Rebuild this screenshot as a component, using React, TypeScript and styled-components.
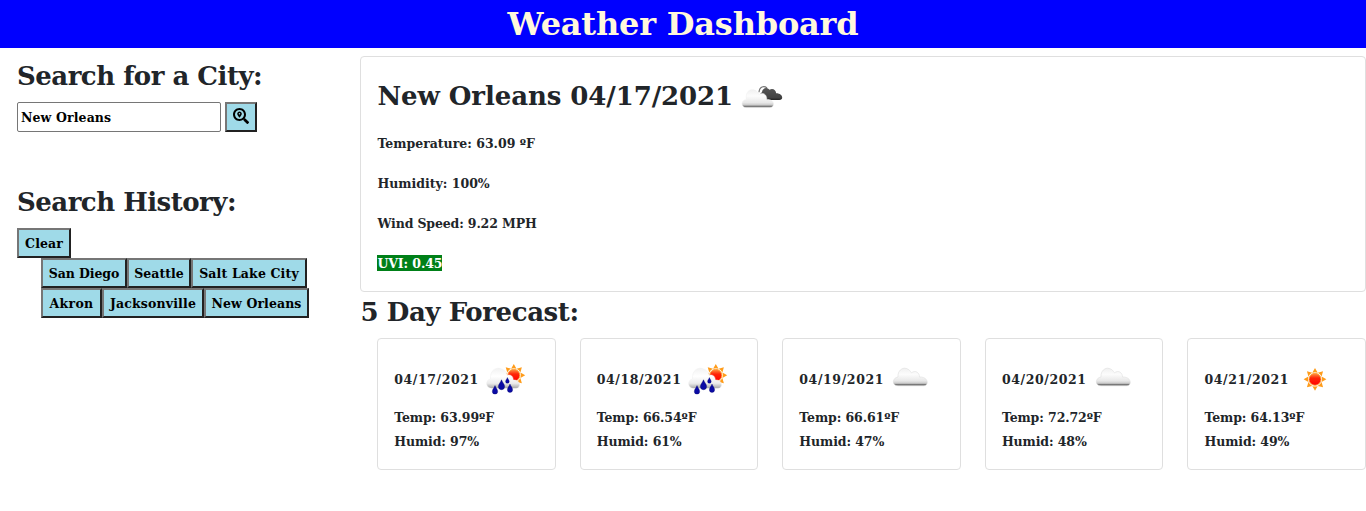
import React, { useState } from 'react';
import styled, { createGlobalStyle } from 'styled-components';
import { FaSearchLocation } from 'react-icons/fa';

const GlobalStyle = createGlobalStyle`
  *, *::before, *::after { box-sizing: border-box; }
  body {
    margin: 0;
    background: #fff;
    color: #212529;
    font: bold 12.5px/24px "DejaVu Serif", serif;
  }
  h1, h2, p, ul { margin: 0; padding: 0; }
`;

const Header = styled.header`
  height: 48px;
  background: #0000ff;
  color: cornsilk;
  text-align: center;
`;
const Title = styled.h1`
  font-size: 32px;
  line-height: 49px;
  letter-spacing: -0.2px;
`;
const Page = styled.main`
  display: grid;
  grid-template-columns: 360.4px minmax(0, 1fr);
  padding-top: 8px;
`;
const Sidebar = styled.aside`
  padding-left: 17px;
`;
const Heading = styled.h2<{ $track: number }>`
  height: 38px;
  font-size: 26px;
  line-height: 40px;
  letter-spacing: ${(p) => p.$track}px;
  white-space: nowrap;
`;
const SearchForm = styled.form`
  display: flex;
  gap: 4px;
  margin: 8px 0 50px;
`;
const CityInput = styled.input`
  width: 204px;
  height: 30px;
  padding: 1px 3px;
  border: 1px solid #767676;
  border-radius: 2px;
  background: #fff;
  color: #000;
  font: inherit;
  letter-spacing: 0.12px;
  outline: none;
`;
const Button = styled.button<{ $width: number; $track?: number }>`
  display: flex;
  align-items: center;
  justify-content: center;
  width: ${(p) => p.$width}px;
  height: 30px;
  padding: 2px 0 0;
  border: 2px solid;
  border-color: #767676 #212121 #212121 #767676;
  background: #9fdae8;
  color: #000;
  font: inherit;
  line-height: 24px;
  letter-spacing: ${(p) => p.$track ?? 0}px;
  white-space: nowrap;
`;
const SearchButton = styled(Button)`
  padding: 0 0 2px;
`;
const ClearRow = styled.div`
  padding-top: 8px;
`;
const History = styled.ul`
  display: flex;
  flex-wrap: wrap;
  width: 300px;
  padding-left: 24px;
  list-style: none;
`;
const Card = styled.section`
  padding: 16px;
  border: 1px solid #dfdfdf;
  border-radius: 4px;
`;
const CurrentTitle = styled.div`
  display: flex;
  align-items: flex-start;
  height: 58px;
  gap: 4px;

  h2 { margin-top: 3px; }
`;
const Reading = styled.p<{ $track: number }>`
  height: 24px;
  line-height: 25px;
  letter-spacing: ${(p) => p.$track}px;
  & + & { margin-top: 16px; }
`;
const UvIndex = styled.span`
  display: block;
  width: fit-content;
  height: 16px;
  margin: 20px 0 4px;
  line-height: 17px;
  background: #008018;
  color: #fff;
  letter-spacing: -0.1px;
`;
const Forecast = styled.div`
  display: grid;
  grid-template-columns: repeat(5, minmax(0, 1fr));
  gap: 24px;
  margin-top: 8px;
  padding-left: 16.8px;
`;
const DayTitle = styled.div`
  display: flex;
  align-items: center;
  gap: 1px;
  height: 50px;
  letter-spacing: 0.6px;
  white-space: nowrap;
`;
const DayReading = styled.p`
  height: 24px;
  line-height: 25px;
  letter-spacing: -0.1px;
  white-space: nowrap;
`;
const Icon = styled.svg`
  flex: none;
  width: 50px;
  height: 50px;
  display: block;
`;

type Kind = 'broken' | 'rain' | 'cloud' | 'sun';

const Gradients = () => (
  <defs>
    <linearGradient id="cloudFill" x1="0" y1="0" x2="0" y2="1">
      <stop offset="0" stopColor="#f0f0f0" />
      <stop offset=".35" stopColor="#fcfcfc" />
      <stop offset=".72" stopColor="#e8e8e8" />
      <stop offset=".86" stopColor="#cacaca" />
      <stop offset=".92" stopColor="#777" />
      <stop offset="1" stopColor="#888" />
    </linearGradient>
    <linearGradient id="rainCloudFill" x1="0" y1="0" x2="0" y2="1">
      <stop offset="0" stopColor="#f2f2f2" />
      <stop offset=".4" stopColor="#fff" />
      <stop offset=".75" stopColor="#ececec" />
      <stop offset=".92" stopColor="#bdbdbd" />
      <stop offset="1" stopColor="#999" />
    </linearGradient>
    <linearGradient id="darkFill" x1="0" y1="0" x2="0" y2="1">
      <stop offset="0" stopColor="#555" />
      <stop offset=".8" stopColor="#424242" />
      <stop offset="1" stopColor="#222" />
    </linearGradient>
    <linearGradient id="sunFill" x1="0" y1="0" x2="0" y2="1">
      <stop offset="0" stopColor="#ff9a45" />
      <stop offset=".4" stopColor="#ff2608" />
      <stop offset="1" stopColor="#f00" />
    </linearGradient>
  </defs>
);

const Sun = ({ x, y }: { x: number; y: number }) => (
  <g transform={`translate(${x} ${y})`}>
    {[0, 45, 90, 135, 180, 225, 270, 315].map((a) => (
      <path key={a} d="M-2.7-6.6L0-11.4L2.7-6.6Q0-7.6-2.7-6.6Z" fill="#ff9c1a" transform={`rotate(${a})`} />
    ))}
    <circle r="6" fill="url(#sunFill)" stroke="#ffa033" strokeWidth=".9" />
  </g>
);

const Drop = ({ x, y, s }: { x: number; y: number; s: number }) => (
  <path
    d="M0-5C.7-2.6 3.1-.6 3.1 1.8A3.1 3.1 0 0 1-3.1 1.8C-3.1-.6-.7-2.6 0-5Z"
    fill="#0a0aa5"
    stroke="#000064"
    strokeWidth=".4"
    transform={`translate(${x} ${y}) scale(${s})`}
  />
);

const WeatherIcon = ({ kind }: { kind: Kind }) => (
  <Icon viewBox="0 0 50 50" aria-hidden="true">
    <Gradients />
    {kind === 'sun' && <Sun x={25} y={24.3} />}
    {kind === 'cloud' && (
      <path
        d="M13 30.8C6.5 30.8 7.2 22.6 13 22C12.5 15.9 17 12.4 21 13.4C24 13.9 25.5 16.4 26.5 17.9C30 14.8 34.5 17.4 34.5 22C43.5 21.5 44.5 30.8 38.5 30.8Z"
        fill="url(#cloudFill)"
        stroke="#d9d9d9"
        strokeWidth=".5"
      />
    )}
    {kind === 'broken' && (
      <>
        <path
          d="M24.5 27C22 25 22 21 25 19.2C25.5 15.2 29.5 13.2 32.5 16.8C36 14.8 38.8 17.3 39.2 20.2C46 20.2 47 27 42.3 27Z"
          fill="url(#darkFill)"
        />
        <path d="M22 19.3C22.5 13.5 27 12.5 30 15" fill="none" stroke="#777" strokeWidth="1.2" />
        <path
          d="M9 34.6C3.8 34.6 3.5 27.2 9.3 26.6C8.2 18.5 13 15.5 17.5 17C20 17.8 21 20 22 21.6C26 18.6 30 21.6 29.8 26.4C38.5 26.1 38 34.6 33 34.6Z"
          fill="url(#cloudFill)"
          stroke="#eee"
          strokeWidth=".5"
        />
      </>
    )}
    {kind === 'rain' && (
      <>
        <Sun x={33.8} y={20.3} />
        <path
          d="M12 33.3C5 33.3 5.2 24.7 10.6 24C9.8 16.5 14.6 12.2 20 13.4C24 14.3 26.5 17 27.3 20.4C30.5 19 33.4 21.5 33.2 25C41 24.4 41.2 33.3 36 33.3Z"
          fill="url(#rainCloudFill)"
          stroke="#eee"
          strokeWidth=".5"
        />
        <Drop x={15} y={34.9} s={0.86} />
        <Drop x={21.5} y={29.8} s={1} />
        <Drop x={27.4} y={25.4} s={0.6} />
        <Drop x={30} y={33.3} s={0.84} />
      </>
    )}
  </Icon>
);

const history = [
  { name: 'San Diego', width: 86, track: -0.1 },
  { name: 'Seattle', width: 64, track: 0 },
  { name: 'Salt Lake City', width: 116, track: 0.15 },
  { name: 'Akron', width: 61, track: 0.35 },
  { name: 'Jacksonville', width: 102, track: 0.15 },
  { name: 'New Orleans', width: 105, track: 0.1 },
];

const days: { date: string; icon: Kind; temp: string; humidity: string }[] = [
  { date: '04/17/2021', icon: 'rain', temp: '63.99', humidity: '97' },
  { date: '04/18/2021', icon: 'rain', temp: '66.54', humidity: '61' },
  { date: '04/19/2021', icon: 'cloud', temp: '66.61', humidity: '47' },
  { date: '04/20/2021', icon: 'cloud', temp: '72.72', humidity: '48' },
  { date: '04/21/2021', icon: 'sun', temp: '64.13', humidity: '49' },
];

export default function App() {
  const [city, setCity] = useState('New Orleans');
  return (
    <>
      <GlobalStyle />
      <Header>
        <Title>Weather Dashboard</Title>
      </Header>
      <Page>
        <Sidebar>
          <Heading $track={-0.5}>Search for a City:</Heading>
          <SearchForm onSubmit={(e) => e.preventDefault()}>
            <CityInput value={city} onChange={(e) => setCity(e.target.value)} />
            <SearchButton $width={32} aria-label="Search">
              <FaSearchLocation size={16} />
            </SearchButton>
          </SearchForm>
          <Heading $track={-0.5}>Search History:</Heading>
          <ClearRow>
            <Button $width={54} $track={0.1}>Clear</Button>
          </ClearRow>
          <History>
            {history.map((h) => (
              <li key={h.name}>
                <Button $width={h.width} $track={h.track}>{h.name}</Button>
              </li>
            ))}
          </History>
        </Sidebar>
        <div>
          <Card>
            <CurrentTitle>
              <Heading $track={-0.09}>New Orleans 04/17/2021</Heading>
              <WeatherIcon kind="broken" />
            </CurrentTitle>
            <Reading $track={0}>Temperature: 63.09 ºF</Reading>
            <Reading $track={0}>Humidity: 100%</Reading>
            <Reading $track={-0.14}>Wind Speed: 9.22 MPH</Reading>
            <UvIndex>UVI: 0.45</UvIndex>
          </Card>
          <Heading $track={-0.4}>5 Day Forecast:</Heading>
          <Forecast>
            {days.map((d) => (
              <Card key={d.date}>
                <DayTitle>
                  {d.date}
                  <WeatherIcon kind={d.icon} />
                </DayTitle>
                <DayReading>Temp: {d.temp}ºF</DayReading>
                <DayReading>Humid: {d.humidity}%</DayReading>
              </Card>
            ))}
          </Forecast>
        </div>
      </Page>
    </>
  );
}
